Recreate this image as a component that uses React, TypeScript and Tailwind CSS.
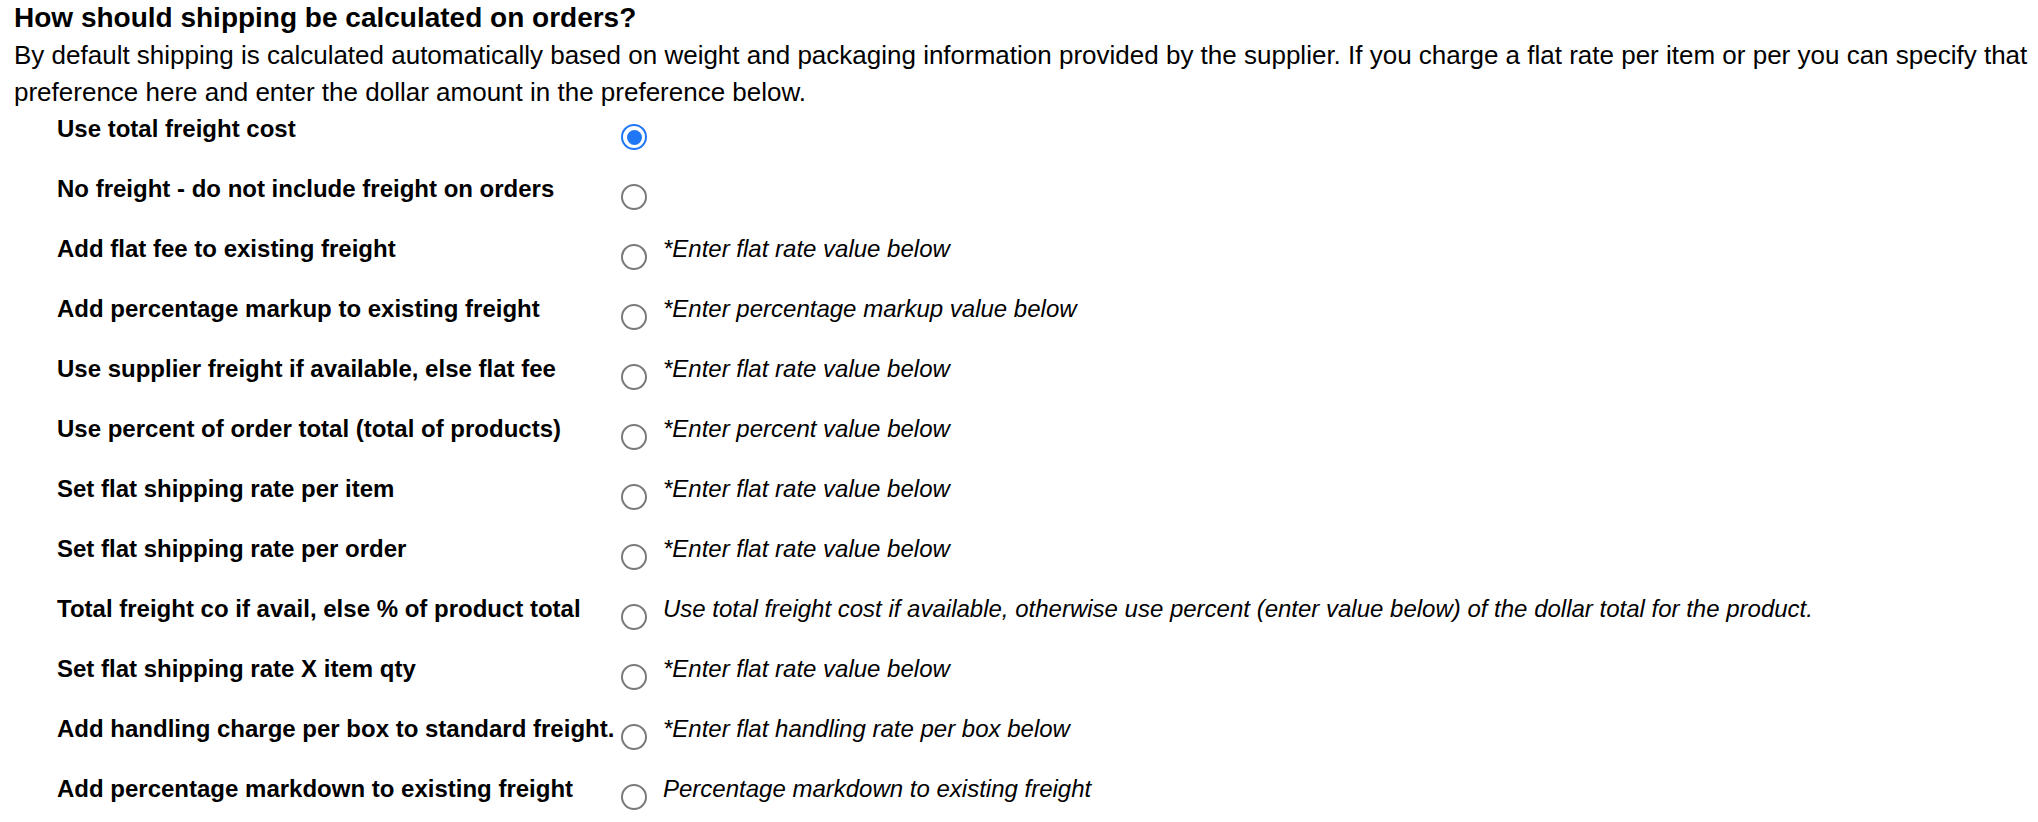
import React from "react";

interface Option {
    label: string;
    note?: string;
    checked?: boolean;
}

const OPTIONS: Option[] = [
    { label: "Use total freight cost", checked: true },
    { label: "No freight - do not include freight on orders" },
    { label: "Add flat fee to existing freight", note: "*Enter flat rate value below" },
    { label: "Add percentage markup to existing freight", note: "*Enter percentage markup value below" },
    { label: "Use supplier freight if available, else flat fee", note: "*Enter flat rate value below" },
    { label: "Use percent of order total (total of products)", note: "*Enter percent value below" },
    { label: "Set flat shipping rate per item", note: "*Enter flat rate value below" },
    { label: "Set flat shipping rate per order", note: "*Enter flat rate value below" },
    {
        label: "Total freight co if avail, else % of product total",
        note: "Use total freight cost if available, otherwise use percent (enter value below) of the dollar total for the product.",
    },
    { label: "Set flat shipping rate X item qty", note: "*Enter flat rate value below" },
    { label: "Add handling charge per box to standard freight.", note: "*Enter flat handling rate per box below" },
    { label: "Add percentage markdown to existing freight", note: "Percentage markdown to existing freight" },
];

function Radio({ checked }: { checked?: boolean }) {
    if (checked) {
        return (
            <div className="w-[26px] h-[26px] rounded-full border-[2.5px] border-[#1f77f5] bg-white flex items-center justify-center">
                <div className="w-[15px] h-[15px] rounded-full bg-[#1f77f5]" />
            </div>
        );
    }
    return <div className="w-[26px] h-[26px] rounded-full border-2 border-[#7a7a7a] bg-white" />;
}

export default function App() {
    return (
        <main className="min-h-screen bg-white text-black px-[14px] font-['Liberation_Sans',Arial,sans-serif]">
            <h2 className="text-[28px] font-bold leading-[35px]">How should shipping be calculated on orders?</h2>
            <p className="pt-[2px] text-[26px] leading-[37px] whitespace-nowrap">
                By default shipping is calculated automatically based on weight and packaging information provided by the supplier. If you charge a flat rate per item or per you can specify that
                <br />
                preference here and enter the dollar amount in the preference below.
            </p>

            {/* Options */}
            <div className="flex flex-col">
                {OPTIONS.map((opt) => (
                    <div key={opt.label} className="flex h-[60px]">
                        <div className="w-[607px] pl-[43px] pt-[6px] text-[24px] leading-[24px] font-bold whitespace-nowrap">
                            {opt.label}
                        </div>
                        <div className="pt-[13px]">
                            <Radio checked={opt.checked} />
                        </div>
                        {opt.note && (
                            <div className="ml-[16px] pt-[6px] text-[24px] leading-[24px] italic whitespace-nowrap">
                                {opt.note}
                            </div>
                        )}
                    </div>
                ))}
            </div>
        </main>
    );
}
